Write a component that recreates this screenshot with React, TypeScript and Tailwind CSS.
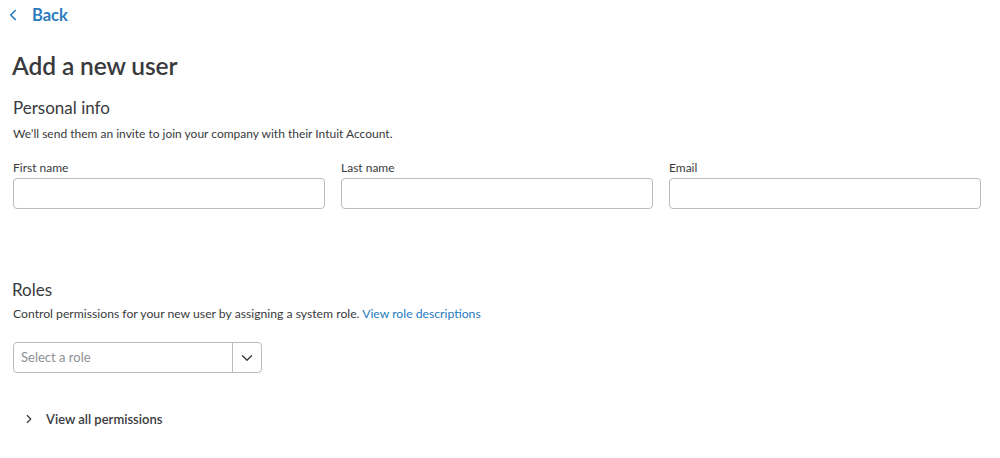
import { ChevronLeft, ChevronDown, ChevronRight } from "lucide-react";

const font = { fontFamily: "Lato, 'Open Sans', sans-serif" };

function Field({ label }: { label: string }) {
  return (
    <div className="flex flex-col">
      <label className="text-[12px] leading-[16px] text-[#393a3d] mb-[2px]">{label}</label>
      <input
        type="text"
        className="h-[31px] w-full rounded-[4px] border border-[#b9bcc1] bg-white px-2 text-[13px] outline-none"
      />
    </div>
  );
}

export default function App() {
  return (
    <div className="min-h-[458px] w-[1000px] bg-white text-[#393a3d]" style={font}>
      <div className="px-[12px] pt-[5px]">
        <a href="#" className="flex items-center gap-[10px] text-[#2b7bbd] -ml-[8px] h-[20px]">
          <ChevronLeft size={18} strokeWidth={2.2} />
          <span className="text-[16.5px] font-bold leading-[20px]">Back</span>
        </a>

        <h1 className="mt-[26px] text-[24.5px] font-semibold leading-[30px] tracking-[-0.1px]">Add a new user</h1>

        <h2 className="mt-[16px] ml-[1px] text-[17px] leading-[22px]">Personal info</h2>
        <p className="mt-[7px] ml-[1px] text-[12px] leading-[16px]">
          We’ll send them an invite to join your company with their Intuit Account.
        </p>

        <div className="mt-[18px] ml-[1px] grid w-[968px] grid-cols-3 gap-[16px]">
          <Field label="First name" />
          <Field label="Last name" />
          <Field label="Email" />
        </div>

        <h2 className="mt-[70px] text-[17px] leading-[22px]">Roles</h2>
        <p className="mt-[5px] ml-[1px] text-[12.2px] leading-[16px]">
          Control permissions for your new user by assigning a system role.{" "}
          <a href="#" className="text-[#1f7ac0]">View role descriptions</a>
        </p>

        <div className="mt-[20px] ml-[1px] flex h-[31px] w-[249px] rounded-[4px] border border-[#b9bcc1]">
          <div className="flex flex-1 items-center px-[7px] text-[13px] text-[#8d9096]">Select a role</div>
          <div className="flex w-[29px] items-center justify-center border-l border-[#b9bcc1]">
            <ChevronDown size={18} strokeWidth={1.8} className="text-[#393a3d]" />
          </div>
        </div>

        <button className="mt-[38px] ml-[10px] flex items-center gap-[10px]">
          <ChevronRight size={14} strokeWidth={2} className="text-[#393a3d]" />
          <span className="text-[13px] font-semibold leading-[16px]">View all permissions</span>
        </button>
      </div>
    </div>
  );
}
